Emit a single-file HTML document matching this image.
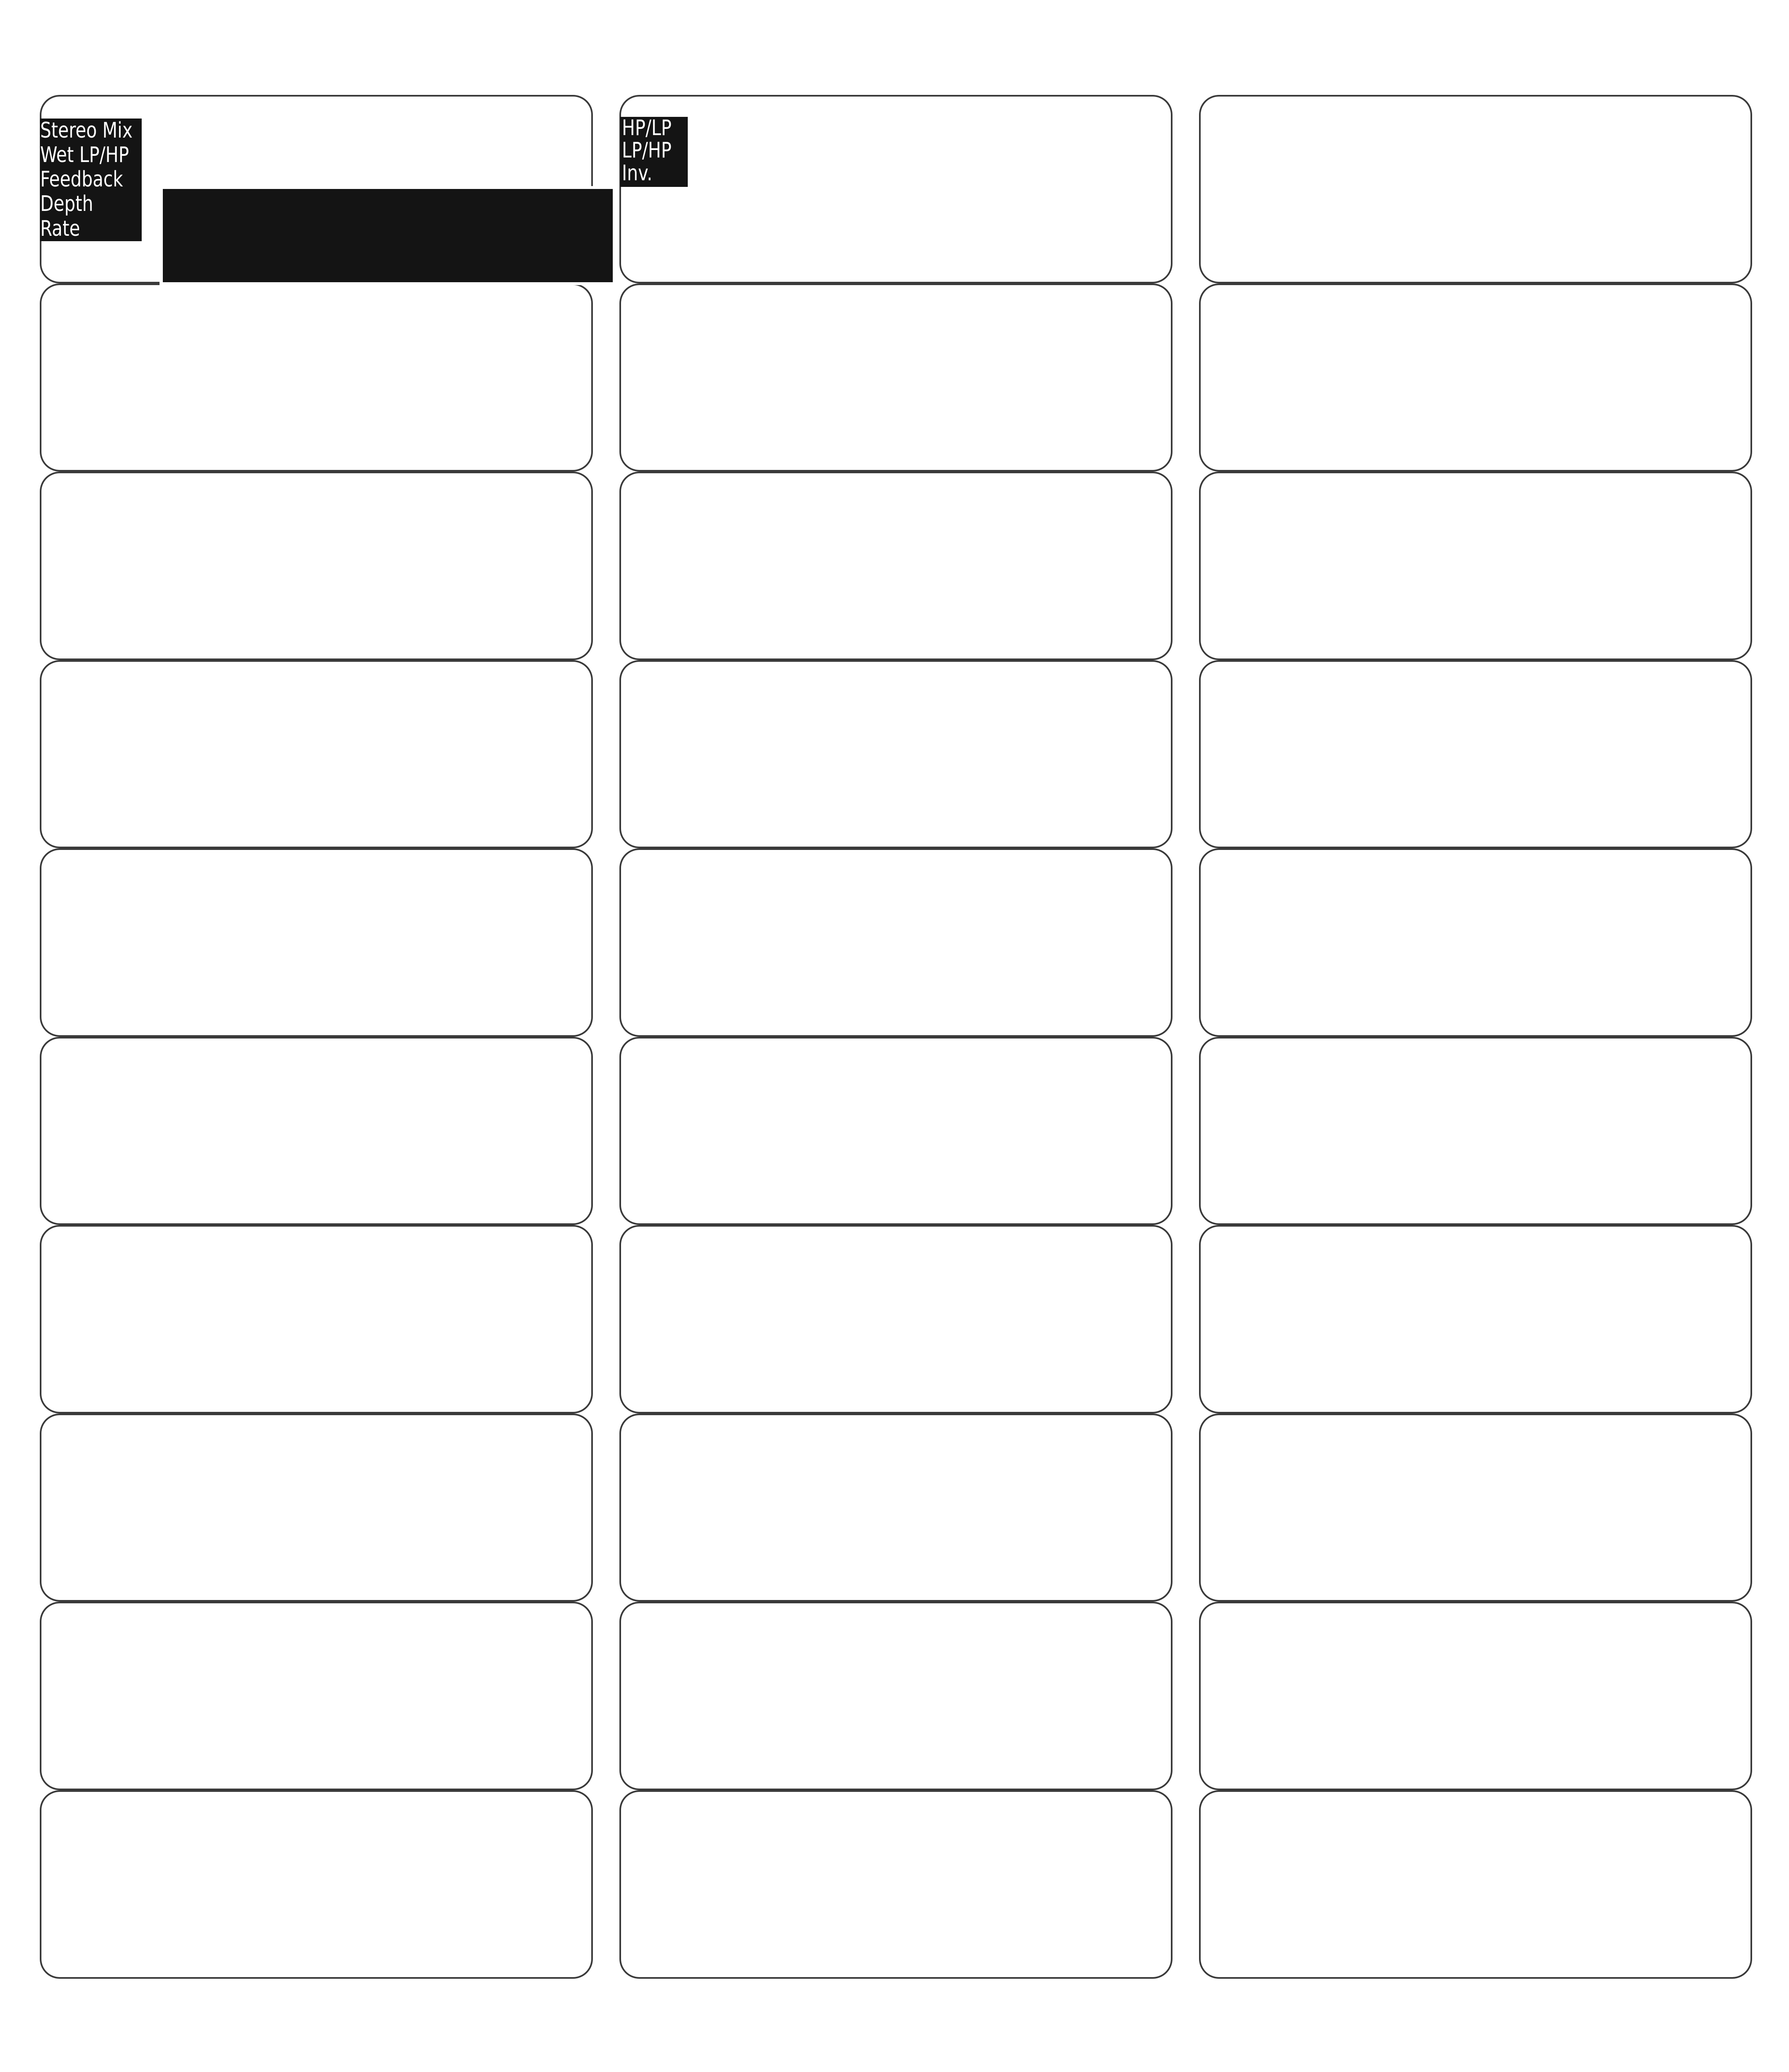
<!DOCTYPE html>
<html><head><meta charset="utf-8"><style>
html,body{margin:0;padding:0;background:#fff;width:4318px;height:100vh;overflow:hidden;}
body{position:relative;}
.b{position:absolute;box-sizing:border-box;width:1335px;height:9.091vh;border:4px solid #3a3a3a;border-radius:48px;background:#fff;}
.c0{left:96px}.c1{left:1495px}.c2{left:2894px}
.r0{top:4.581vh}.r1{top:13.672vh}.r2{top:22.763vh}.r3{top:31.854vh}.r4{top:40.945vh}
.r5{top:50.036vh}.r6{top:59.127vh}.r7{top:68.218vh}.r8{top:77.309vh}.r9{top:86.400vh}
.lab{position:absolute;background:#141414;color:#fff;font-family:"DejaVu Sans Condensed","DejaVu Sans","Liberation Sans",sans-serif;font-size:1.038vh;line-height:1.181vh;white-space:nowrap;overflow:hidden;}
.lab span{display:block;transform:scaleX(0.9);transform-origin:0 0;}
</style></head><body>
<div class="b c0 r0"></div><div class="b c1 r0"></div><div class="b c2 r0"></div>
<div class="b c0 r1"></div><div class="b c1 r1"></div><div class="b c2 r1"></div>
<div class="b c0 r2"></div><div class="b c1 r2"></div><div class="b c2 r2"></div>
<div class="b c0 r3"></div><div class="b c1 r3"></div><div class="b c2 r3"></div>
<div class="b c0 r4"></div><div class="b c1 r4"></div><div class="b c2 r4"></div>
<div class="b c0 r5"></div><div class="b c1 r5"></div><div class="b c2 r5"></div>
<div class="b c0 r6"></div><div class="b c1 r6"></div><div class="b c2 r6"></div>
<div class="b c0 r7"></div><div class="b c1 r7"></div><div class="b c2 r7"></div>
<div class="b c0 r8"></div><div class="b c1 r8"></div><div class="b c2 r8"></div>
<div class="b c0 r9"></div><div class="b c1 r9"></div><div class="b c2 r9"></div>
<div class="lab" style="left:97px;top:5.727vh;width:245px;height:5.923vh;"><span>Stereo Mix<br>Wet LP/HP<br>Feedback<br>Depth<br>Rate</span></div>
<div style="position:absolute;left:385px;top:8.984vh;width:1102px;height:4.778vh;background:#fff;"></div>
<div style="position:absolute;left:393px;top:9.127vh;width:1086px;height:4.492vh;background:#141414;"></div>
<div class="lab" style="left:1497px;top:5.637vh;width:163px;height:3.382vh;line-height:1.092vh;padding-left:4px;box-sizing:border-box;"><span>HP/LP<br>LP/HP<br>Inv.</span></div>
</body></html>
